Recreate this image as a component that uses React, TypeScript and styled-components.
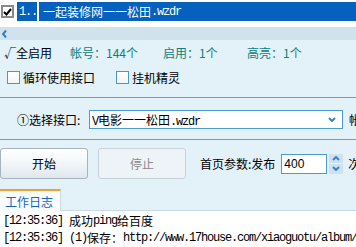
import React from 'react';
import styled, { createGlobalStyle } from 'styled-components';

const GlobalStyle = createGlobalStyle`
  html, body {
    margin: 0;
    padding: 0;
  }
  body {
    background: #e3f1f9;
    font-family: "Noto Sans CJK SC", sans-serif;
    font-size: 12px;
    color: #000;
  }
`;

const Page = styled.div`
  width: 356px;
  height: 247px;
  overflow: hidden;
  display: flex;
  flex-direction: column;
  background: #e3f1f9;
  white-space: nowrap;
`;

const Mono = styled.span`
  font-family: "Liberation Mono", "Noto Sans CJK SC", monospace;
  font-size: 12px;
  letter-spacing: -1.2px;
`;

/* ---- list view ---- */

const ListView = styled.div`
  height: 27px;
  flex: none;
  background: #fff;
  padding-top: 2px;
  box-sizing: border-box;
`;

const ListRow = styled.div`
  display: flex;
  height: 19px;
  gap: 2px;
`;

const CheckCell = styled.div`
  width: 14px;
  display: flex;
  align-items: center;
  padding-left: 1px;
`;

const RowCell = styled.div<{ $w?: number; $pad: number }>`
  ${(p) => (p.$w ? `width: ${p.$w}px;` : 'flex: 1;')}
  background: #0560be;
  color: #fff;
  display: flex;
  align-items: center;
  padding-left: ${(p) => p.$pad}px;
  box-sizing: border-box;
  overflow: hidden;
`;

const BigCheck = styled.div`
  width: 13px;
  height: 13px;
  box-sizing: border-box;
  border: 2px solid #8a8a8a;
  background: #fff;
  display: flex;
  align-items: center;
  justify-content: center;
`;

const ScrollBar = styled.div`
  height: 13px;
  flex: none;
  background: #d0e2ec;
  display: flex;
  align-items: center;
  padding-left: 2px;
`;

/* ---- stats ---- */

const StatsRow = styled.div`
  height: 24px;
  flex: none;
  display: grid;
  grid-template-columns: 66px 93px 84px 1fr;
  align-items: center;
  padding-left: 4px;
`;

const Stat = styled.span<{ $teal?: boolean }>`
  color: ${(p) => (p.$teal ? '#0b8080' : '#000')};
`;

/* ---- options ---- */

const OptionsRow = styled.div`
  height: 27px;
  flex: none;
  display: flex;
  align-items: center;
  padding-left: 7px;
`;

const Option = styled.label<{ $w?: number }>`
  display: flex;
  align-items: center;
  gap: 3px;
  ${(p) => (p.$w ? `width: ${p.$w}px;` : '')}
`;

const Box = styled.span`
  width: 13px;
  height: 13px;
  box-sizing: border-box;
  border: 1px solid #4d95cf;
  background: linear-gradient(#ffffff, #f2f6f9);
`;

const Rule = styled.div<{ $top?: number }>`
  height: 1px;
  flex: none;
  margin-top: ${(p) => p.$top ?? 0}px;
  background: #55a5dc;
`;

/* ---- select ---- */

const SelectRow = styled.div`
  height: 41px;
  flex: none;
  box-sizing: border-box;
  padding: 2px 0 0 17px;
  display: flex;
  align-items: center;
`;

const FieldLabel = styled.span<{ $w?: number }>`
  ${(p) => (p.$w ? `width: ${p.$w}px;` : '')}
  flex: none;
`;

const Select = styled.div`
  width: 254px;
  height: 19px;
  flex: none;
  box-sizing: border-box;
  border: 1px solid #4d9ad6;
  background: #fff;
  display: flex;
  align-items: center;
  padding: 0 6px 0 2px;
  margin-right: 6px;
`;

const SelectText = styled.span`
  flex: 1;
`;

/* ---- buttons ---- */

const ActionRow = styled.div`
  height: 49px;
  flex: none;
  box-sizing: border-box;
  padding-top: 8px;
  display: flex;
  align-items: flex-start;
`;

const Button = styled.button<{ $disabled?: boolean }>`
  width: 88px;
  height: 31px;
  flex: none;
  box-sizing: border-box;
  border-radius: 3px;
  border: 1px solid ${(p) => (p.$disabled ? '#c5d2dc' : '#a6b3bf')};
  background: ${(p) =>
    p.$disabled ? '#edf3f7' : 'linear-gradient(#ffffff, #f4f7f9 45%, #dfe7ee)'};
  color: ${(p) => (p.$disabled ? '#8a8a8a' : '#000')};
  font-family: "Noto Sans CJK SC", sans-serif;
  font-size: 12px;
  margin-right: 10px;
  padding: 0;
`;

const ParamGroup = styled.div`
  height: 31px;
  display: flex;
  align-items: center;
  margin-left: 4px;
`;

const NumInput = styled.div`
  width: 46px;
  height: 20px;
  box-sizing: border-box;
  border: 1px solid #4d9ad6;
  background: #fff;
  font-family: "Liberation Sans", sans-serif;
  font-size: 12px;
  display: flex;
  align-items: center;
  padding-left: 2px;
  margin-left: 6px;
`;

const Spinner = styled.div`
  width: 14px;
  height: 20px;
  margin: 0 5px 0 2px;
  display: flex;
  flex-direction: column;
  gap: 1px;
`;

const SpinBtn = styled.div`
  flex: 1;
  background: #cfe1ee;
  display: flex;
  align-items: center;
  justify-content: center;
`;

/* ---- log ---- */

const TabStrip = styled.div`
  height: 22px;
  flex: none;
  box-sizing: border-box;
  border-bottom: 1px solid #c8dbe7;
  display: flex;
`;

const Tab = styled.div`
  width: 61px;
  box-sizing: border-box;
  border-top: 2px solid #f0a030;
  border-right: 1px solid #cfdbe4;
  background: #fafcfe;
  color: #1466c2;
  padding-left: 5px;
  display: flex;
  align-items: center;
  margin-bottom: -1px;
`;

const LogArea = styled.div`
  flex: 1;
  background: #fff;
  padding: 1px 3px 0;
`;

const LogLine = styled.div`
  height: 17px;
  display: flex;
  align-items: center;
`;

const Chevron = ({ dir, color = '#3a84c6' }: { dir: 'down' | 'up' | 'left'; color?: string }) => {
  const pts = dir === 'down' ? '1,1 4,4 7,1' : dir === 'up' ? '1,4 4,1 7,4' : '4,0.5 1,4 4,7.5';
  const w = dir === 'left' ? 6 : 8;
  const h = dir === 'left' ? 8 : 5;
  return (
    <svg width={w} height={h} viewBox={`0 0 ${w} ${h}`}>
      <polyline points={pts} fill="none" stroke={color} strokeWidth="2" />
    </svg>
  );
};

const logs = [
  { time: '[12:35:36]', parts: ['成功', 'ping', '给百度'] },
  { time: '[12:35:36]', parts: ['(1)', '保存：', 'http://www.17house.com/xiaoguotu/album/'] },
];

const isAscii = (s: string) => /^[\x00-\x7f]+$/.test(s);

export default function App() {
  return (
    <Page>
      <GlobalStyle />
      <ListView>
        <ListRow>
          <CheckCell>
            <BigCheck>
              <svg width="9" height="8" viewBox="0 0 9 8">
                <polyline points="1,4 3.5,6.5 8,1" fill="none" stroke="#000" strokeWidth="2" />
              </svg>
            </BigCheck>
          </CheckCell>
          <RowCell $w={20} $pad={2}>
            <Mono>1..</Mono>
          </RowCell>
          <RowCell $pad={4}>
            一起装修网一一松田<Mono>.wzdr</Mono>
          </RowCell>
        </ListRow>
      </ListView>
      <ScrollBar>
        <Chevron dir="left" color="#2f7cc4" />
      </ScrollBar>

      <StatsRow>
        <Stat>√全启用</Stat>
        <Stat $teal>帐号：144个</Stat>
        <Stat $teal>启用：1个</Stat>
        <Stat $teal>高亮：1个</Stat>
      </StatsRow>

      <OptionsRow>
        <Option $w={109}>
          <Box />
          循环使用接口
        </Option>
        <Option>
          <Box />
          挂机精灵
        </Option>
      </OptionsRow>

      <Rule $top={6} />

      <SelectRow>
        <FieldLabel $w={72}>①选择接口:</FieldLabel>
        <Select>
          <SelectText>
            <Mono>V</Mono>电影一一松田<Mono>.wzdr</Mono>
          </SelectText>
          <Chevron dir="down" />
        </Select>
        <FieldLabel>帐号</FieldLabel>
      </SelectRow>

      <Rule />

      <ActionRow>
        <Button>开始</Button>
        <Button $disabled>停止</Button>
        <ParamGroup>
          <FieldLabel>首页参数:发布</FieldLabel>
          <NumInput>400</NumInput>
          <Spinner>
            <SpinBtn>
              <Chevron dir="up" />
            </SpinBtn>
            <SpinBtn>
              <Chevron dir="down" />
            </SpinBtn>
          </Spinner>
          <FieldLabel>次</FieldLabel>
        </ParamGroup>
      </ActionRow>

      <TabStrip>
        <Tab>工作日志</Tab>
      </TabStrip>

      <LogArea>
        {logs.map((l, i) => (
          <LogLine key={i}>
            <Mono>{l.time}&nbsp;</Mono>
            {l.parts.map((p, j) => (isAscii(p) ? <Mono key={j}>{p}</Mono> : <span key={j}>{p}</span>))}
          </LogLine>
        ))}
      </LogArea>
    </Page>
  );
}
